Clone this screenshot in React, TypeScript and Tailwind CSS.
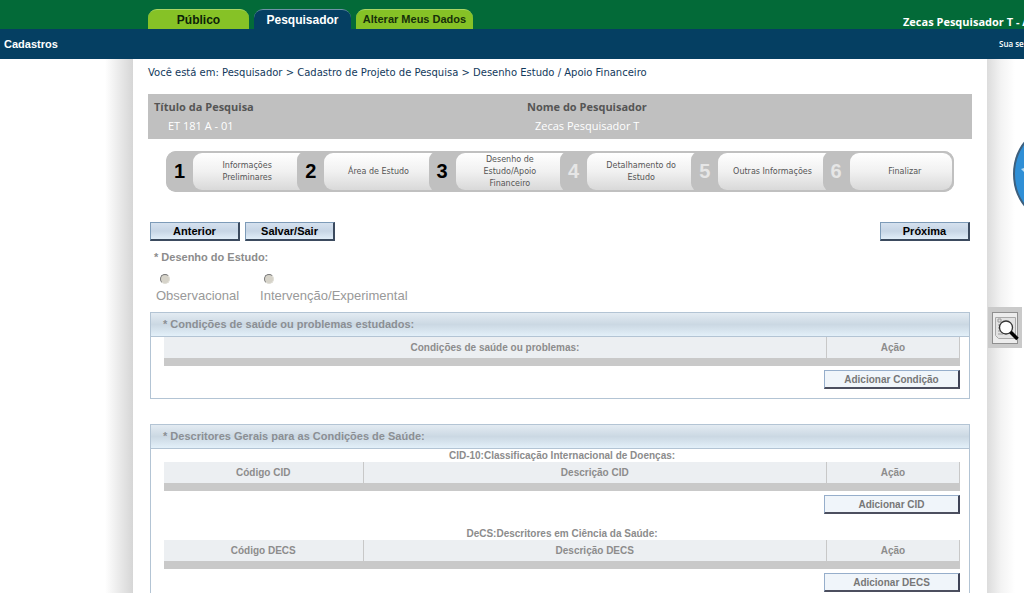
type Step = { label: string; done: boolean };

const steps: Step[] = [
  { label: 'Informações Preliminares', done: true },
  { label: 'Área de Estudo', done: true },
  { label: 'Desenho de Estudo/Apoio Financeiro', done: true },
  { label: 'Detalhamento do Estudo', done: false },
  { label: 'Outras Informações', done: false },
  { label: 'Finalizar', done: false },
];

function Tab({ label, active = false }: { label: string; active?: boolean }) {
  return (
    <a
      href="#"
      className={`flex h-5 items-center justify-center rounded-t-[9px] border-t text-xs font-bold ${
        active
          ? 'w-[97px] border-[#6f93a8] bg-[#053f62] text-white'
          : 'w-[101px] border-[#a9d765] bg-[#86c226] text-[#0c2208]'
      }`}
    >
      {label}
    </a>
  );
}

function NavButton({ label }: { label: string }) {
  return (
    <button
      type="button"
      className="h-[19px] w-[90px] border-t border-r-2 border-b-2 border-l border-t-[#7d9bb8] border-r-[#3b4a5e] border-b-[#3b4a5e] border-l-[#7d9bb8] bg-linear-to-b from-[#d5e1ee] via-[#c6d5e5] to-[#e0edf8] text-[11px] leading-4 font-bold text-black"
    >
      {label}
    </button>
  );
}

function AddButton({ label }: { label: string }) {
  return (
    <div className="flex justify-end pt-1">
      <button
        type="button"
        className="h-[19px] w-[136px] border-t border-r-2 border-b-2 border-l border-t-[#96aecb] border-r-[#3f4356] border-b-[#4c4f5f] border-l-[#96aecb] bg-[#f0f5fa] pt-px text-[10px] leading-4 font-bold text-[#777]"
      >
        {label}
      </button>
    </div>
  );
}

function Panel({ title, children }: { title: string; children: React.ReactNode }) {
  return (
    <section className="border border-[#b3c4d4]">
      <h2 className="flex h-6 items-center border-b border-[#b3c4d4] bg-linear-to-b from-[#e3ebf2] via-[#cbd8e3] to-[#e3f0f9] px-3 text-[11px] font-bold text-[#8b8f94]">
        {title}
      </h2>
      <div className="pr-[9px] pb-[9px] pl-[13px]">{children}</div>
    </section>
  );
}

function DataTable({ caption, columns }: { caption?: string; columns: string[] }) {
  return (
    <table className="w-full table-fixed border-collapse text-[10px] text-[#8c8c8c]">
      {caption && <caption className="h-[13px] leading-[14px] font-bold">{caption}</caption>}
      <thead>
        <tr className="h-[21px] bg-[#eceff2]">
          {columns.map((column, i) => (
            <th
              key={column}
              className={`border-r border-[#c8c8c8] p-0 leading-4 font-bold ${
                i === columns.length - 1 ? 'w-[133px]' : columns.length === 3 && i === 0 ? 'w-[199px]' : ''
              }`}
            >
              {column}
            </th>
          ))}
        </tr>
      </thead>
      <tfoot>
        <tr className="h-2 bg-[#c9c9c9]">
          <td colSpan={columns.length} className="p-0" />
        </tr>
      </tfoot>
    </table>
  );
}

function StepBar() {
  return (
    <ol className="mx-[18px] mt-3 grid h-[41px] grid-cols-6 overflow-hidden rounded-[10px] bg-[#c0c0c0]">
      {steps.map((step, i) => (
        <li key={step.label} className="flex rounded-l-[9px] bg-[#c0c0c0]">
          <span
            className={`flex w-[27px] shrink-0 items-center justify-center pb-0.5 text-xl font-bold ${
              step.done ? 'text-black' : 'text-[#e6e6e6]'
            }`}
          >
            {i + 1}
          </span>
          <div
            className={`my-0.5 flex flex-1 items-center justify-center bg-linear-to-b from-white via-[#f1f1f1] to-[#d9d9d9] text-center font-['DejaVu_Sans',sans-serif] text-[8px] leading-3 text-[#555] ${
              i === steps.length - 1 ? 'mr-0.5 rounded-[9px] pr-2 pl-4' : '-mr-2 rounded-l-[9px] pr-4 pl-3'
            }`}
          >
            {step.label}
          </div>
        </li>
      ))}
    </ol>
  );
}

function StudyOption({ label }: { label: string }) {
  return (
    <label className="flex flex-col items-start gap-1">
      <input
        type="radio"
        name="desenho"
        className="ml-1 size-[10px] appearance-none rounded-full border border-t-[#777] border-r-[#e0ded6] border-b-[#e0ded6] border-l-[#777] bg-[#d6d3c9]"
      />
      <span className="text-[13px] leading-4 text-[#999]">{label}</span>
    </label>
  );
}

export default function App() {
  return (
    <div className="flex min-h-screen flex-col overflow-hidden bg-white font-['Liberation_Sans',Arial,sans-serif]">
      {/* Topo */}
      <header className="overflow-hidden whitespace-nowrap">
        <div className="flex h-[29px] items-end bg-[#036a38] pl-37">
          <nav className="flex flex-1 gap-[5px]">
            <Tab label="Público" />
            <Tab label="Pesquisador" active />
            <a
              href="#"
              className="flex h-5 w-[117px] items-center justify-center rounded-t-[9px] border-t border-[#a9d765] bg-[#86c226] text-[11px] font-bold text-[#16300a]"
            >
              Alterar Meus Dados
            </a>
          </nav>
          <div className="w-[121px] font-['Open_Sans',sans-serif] text-[11px] leading-[14px] font-bold text-white">
            Zecas Pesquisador T - A
          </div>
        </div>
        <div className="flex h-[30px] items-center justify-between bg-[#053f62] pl-1 text-white">
          <a href="#" className="text-[11px] font-bold">
            Cadastros
          </a>
          <span className="w-[25px] font-['Open_Sans',sans-serif] text-[8px] font-semibold">Sua ses</span>
        </div>
      </header>

      <div className="flex flex-1">
        <div className="flex w-[133px] shrink-0 justify-end">
          <div className="w-7 bg-linear-to-r from-white to-[#d6d6d6]" />
        </div>

        <main className="min-w-0 flex-1 px-[15px]">
          <p className="pt-2 font-['DejaVu_Sans',sans-serif] text-[10px] leading-3 text-[#12395c]">
            Você está em: Pesquisador &gt; Cadastro de Projeto de Pesquisa &gt; Desenho Estudo / Apoio Financeiro
          </p>

          <dl className="mt-[15px] grid h-[45px] grid-cols-[373px_1fr] bg-[#c0c0c0] px-1.5 pt-[3px] font-['Open_Sans',sans-serif] text-[11px] leading-[19px]">
            <div>
              <dt className="font-bold text-[#555]">Título da Pesquisa</dt>
              <dd className="pl-[14px] text-white">ET 181 A - 01</dd>
            </div>
            <div>
              <dt className="font-bold text-[#555]">Nome do Pesquisador</dt>
              <dd className="pl-2 text-white">Zecas Pesquisador T</dd>
            </div>
          </dl>

          <StepBar />

          <form className="mt-[30px] pr-[2px] pb-5 pl-[2px]">
            <div className="flex gap-[5px]">
              <NavButton label="Anterior" />
              <NavButton label="Salvar/Sair" />
              <div className="ml-auto flex">
                <NavButton label="Próxima" />
              </div>
            </div>

            <fieldset className="mt-2 h-[63px] px-1">
              <legend className="text-[11px] leading-4 font-bold text-[#8c8c8c]">* Desenho do Estudo:</legend>
              <div className="flex gap-[21px] pt-[9px] pl-0.5">
                <StudyOption label="Observacional" />
                <StudyOption label="Intervenção/Experimental" />
              </div>
            </fieldset>

            <Panel title="* Condições de saúde ou problemas estudados:">
              <DataTable columns={['Condições de saúde ou problemas:', 'Ação']} />
              <AddButton label="Adicionar Condição" />
            </Panel>

            <div className="mt-[25px]">
              <Panel title="* Descritores Gerais para as Condições de Saúde:">
                <DataTable
                  caption="CID-10:Classificação Internacional de Doenças:"
                  columns={['Código CID', 'Descrição CID', 'Ação']}
                />
                <AddButton label="Adicionar CID" />
                <div className="pt-[13px]">
                  <DataTable
                    caption="DeCS:Descritores em Ciência da Saúde:"
                    columns={['Código DECS', 'Descrição DECS', 'Ação']}
                  />
                </div>
                <AddButton label="Adicionar DECS" />
              </Panel>
            </div>
          </form>
        </main>

        <div className="w-[37px] shrink-0">
          <div className="h-full w-7 bg-linear-to-r from-[#dcdcdc] via-[#f3f3f3] to-white" />
        </div>
      </div>

      {/* Atalhos flutuantes */}
      <a
        href="#"
        aria-label="Ajuda"
        className="fixed top-[121px] -right-[95px] size-[106px] rounded-full border-2 border-[#3d5f7d] bg-[#2f8fd6]"
      >
        <svg width="102" height="102" viewBox="0 0 102 102" fill="none">
          <path d="M6 46l3-1v4z" fill="#b5dcf5" />
        </svg>
      </a>
      <button
        type="button"
        aria-label="Pesquisar"
        className="fixed top-[307px] right-0.5 flex h-[41px] w-[34px] items-center justify-center bg-[#cacaca]"
      >
        <svg width="28" height="34" viewBox="0 0 28 34" fill="none">
          <rect x="1.5" y="1.5" width="25" height="31" fill="#ececec" stroke="#8f8f8f" />
          <path d="M4.500 6.500h20v21h-17l-3-3z" fill="#e2e2e2" stroke="#aaa" />
          <path d="M7 8h3v3H7zM7 14h3M7 17h2M7 20h3M7 23h5" stroke="#9a9a9a" />
          <circle cx="15" cy="16.500" r="6.500" fill="#fff" stroke="#333" strokeWidth="1.300" />
          <path d="M19.500 21l7 7" stroke="#000" strokeWidth="3.500" />
        </svg>
      </button>
    </div>
  );
}
